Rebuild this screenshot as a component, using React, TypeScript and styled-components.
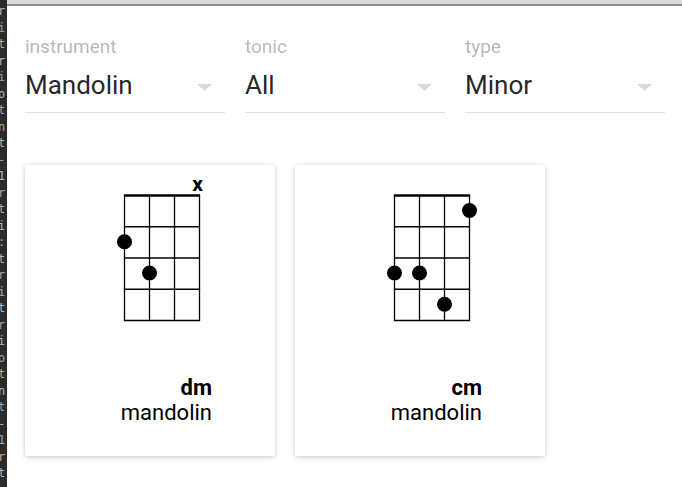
import styled, { createGlobalStyle } from "styled-components";

const GlobalStyle = createGlobalStyle`
    html, body {
        margin: 0;
        padding: 0;
        background: #ffffff;
    }

    body {
        font-family: Roboto, "Liberation Sans", Arial, sans-serif;
        overflow: hidden;
    }
`;

const Page = styled.div`
    display: flex;
    width: 682px;
    height: 487px;
    overflow: hidden;
`;

const Gutter = styled.div`
    width: 7px;
    flex-shrink: 0;
    background: #2b2b2b;
    overflow: hidden;
    padding-top: 3px;
    box-sizing: border-box;
`;

const GutterLine = styled.div<{ $tint: string }>`
    font-family: "DejaVu Sans Mono", "Liberation Mono", monospace;
    font-size: 12px;
    line-height: 16.5px;
    color: ${(p) => p.$tint};
    white-space: pre;
    margin-left: -2px;
`;

const Main = styled.div`
    flex: 1;
    display: flex;
    flex-direction: column;
`;

const TopBar = styled.div`
    height: 4px;
    background: #dadada;
    border-bottom: 2px solid #8d8d8d;
    flex-shrink: 0;
`;

const Content = styled.div`
    padding: 31px 18px 0 18px;
    display: flex;
    flex-direction: column;
    gap: 52px;
`;

const Filters = styled.div`
    display: flex;
    gap: 20px;
`;

const Field = styled.div`
    width: 200px;
    display: flex;
    flex-direction: column;
    border-bottom: 1px solid #e0e0e0;
`;

const FieldLabel = styled.div`
    font-size: 19px;
    line-height: 20px;
    color: rgba(0, 0, 0, 0.3);
`;

const FieldValue = styled.div`
    display: flex;
    align-items: center;
    justify-content: space-between;
    margin-top: 12px;
    margin-bottom: 11px;
    font-size: 26px;
    line-height: 32px;
    color: rgba(0, 0, 0, 0.87);

    > svg {
        margin-right: 13px;
        margin-top: 4px;
    }
`;

const Cards = styled.div`
    display: flex;
    gap: 20px;
`;

const Card = styled.div`
    width: 250px;
    display: flex;
    flex-direction: column;
    background: #ffffff;
    border-radius: 2px;
    box-shadow: rgba(0, 0, 0, 0.12) 0 1px 6px, rgba(0, 0, 0, 0.12) 0 1px 4px;
    padding-bottom: 31px;
`;

const Caption = styled.div`
    margin-top: 40px;
    padding-right: 63px;
    text-align: right;
    font-size: 22px;
    line-height: 25px;
    color: #000000;

    > b {
        display: block;
        font-weight: 700;
    }
`;

const gutterChars = [
    "r", "i", "t", "r", "i", "o", "t", "n", "t", "-", "1", "r", "t", "i", ":",
    "t", "r", "i", "t", "r", "i", "o", "t", "n", "t", "-", "1", "r", "t",
];

const tints = ["#a9b7c6", "#9aa5b1", "#b8a98c", "#a9b7c6", "#8fa3b6"];

type Chord = {
    name: string;
    instrument: string;
    dots: { string: number; fret: number }[];
    muted: number[];
};

const chords: Chord[] = [
    {
        name: "dm",
        instrument: "mandolin",
        dots: [
            { string: 0, fret: 2 },
            { string: 1, fret: 3 },
        ],
        muted: [3],
    },
    {
        name: "cm",
        instrument: "mandolin",
        dots: [
            { string: 3, fret: 1 },
            { string: 0, fret: 3 },
            { string: 1, fret: 3 },
            { string: 2, fret: 4 },
        ],
        muted: [],
    },
];

const GRID_X = 99.5;
const GRID_Y = 30.5;
const STRING_GAP = 25;
const FRET_GAP = 31.25;

const ChordDiagram = ({ chord }: { chord: Chord }) => {
    const strings = [0, 1, 2, 3];
    const frets = [0, 1, 2, 3, 4];
    const bottom = GRID_Y + FRET_GAP * 4;
    const right = GRID_X + STRING_GAP * 3;

    return (
        <svg width="250" height="170" viewBox="0 0 250 170">
            {strings.map((s) => (
                <line
                    key={"s" + s}
                    x1={GRID_X + s * STRING_GAP}
                    y1={GRID_Y}
                    x2={GRID_X + s * STRING_GAP}
                    y2={bottom}
                    stroke="#000"
                    strokeWidth="1.3"
                />
            ))}
            {frets.map((f) => (
                <line
                    key={"f" + f}
                    x1={GRID_X - 0.6}
                    y1={GRID_Y + f * FRET_GAP}
                    x2={right + 0.6}
                    y2={GRID_Y + f * FRET_GAP}
                    stroke="#000"
                    strokeWidth={f == 0 ? 2.6 : 1.3}
                />
            ))}
            {chord.muted.map((s) => (
                <text
                    key={"m" + s}
                    x={GRID_X + s * STRING_GAP - 2}
                    y={26}
                    textAnchor="middle"
                    fontFamily="Roboto, 'Liberation Sans', sans-serif"
                    fontWeight="700"
                    fontSize="21"
                >
                    x
                </text>
            ))}
            {chord.dots.map((d, i) => (
                <circle
                    key={"d" + i}
                    cx={GRID_X + d.string * STRING_GAP}
                    cy={GRID_Y + (d.fret - 0.52) * FRET_GAP}
                    r="7.5"
                    fill="#000"
                />
            ))}
        </svg>
    );
};

const Arrow = () => (
    <svg width="15" height="7" viewBox="0 0 15 7">
        <path d="M0 0 L15 0 L7.5 7 Z" fill="#d9d9d9" />
    </svg>
);

const filters = [
    { label: "instrument", value: "Mandolin" },
    { label: "tonic", value: "All" },
    { label: "type", value: "Minor" },
];

const App = () => {
    return (
        <Page>
            <GlobalStyle />
            <Gutter>
                {gutterChars.map((c, i) => (
                    <GutterLine key={i} $tint={tints[i % tints.length]}>
                        {c}
                    </GutterLine>
                ))}
            </Gutter>
            <Main>
                <TopBar />
                <Content>
                    <Filters>
                        {filters.map((f) => (
                            <Field key={f.label}>
                                <FieldLabel>{f.label}</FieldLabel>
                                <FieldValue>
                                    <span>{f.value}</span>
                                    <Arrow />
                                </FieldValue>
                            </Field>
                        ))}
                    </Filters>
                    <Cards>
                        {chords.map((c) => (
                            <Card key={c.name}>
                                <ChordDiagram chord={c} />
                                <Caption>
                                    <b>{c.name}</b>
                                    {c.instrument}
                                </Caption>
                            </Card>
                        ))}
                    </Cards>
                </Content>
            </Main>
        </Page>
    );
};

export default App;
